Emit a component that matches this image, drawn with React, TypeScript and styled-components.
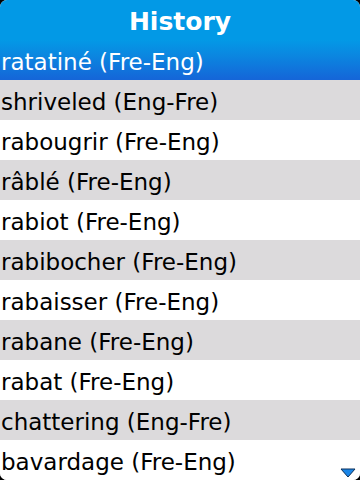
import React from "react";
import styled, { createGlobalStyle } from "styled-components";

const GlobalStyle = createGlobalStyle`
  html, body {
    margin: 0;
    padding: 0;
    background: #000;
  }
  #root {
    width: 360px;
    height: 480px;
  }
`;

const Screen = styled.div`
  position: relative;
  width: 360px;
  height: 480px;
  overflow: hidden;
  border-radius: 7px;
  background: #fff;
  font-family: "DejaVu Sans", "Liberation Sans", sans-serif;
  display: flex;
  flex-direction: column;
`;

const TitleBar = styled.div`
  height: 42px;
  background: #0299e6;
  color: #fff;
  font-weight: bold;
  font-size: 25px;
  display: flex;
  align-items: center;
  justify-content: center;
  padding-top: 2px;
  box-sizing: border-box;
`;

const List = styled.div`
  display: flex;
  flex-direction: column;
`;

const Row = styled.div<{ $shade: "sel" | "gray" | "white" }>`
  height: 40px;
  flex-shrink: 0;
  display: flex;
  align-items: center;
  padding: 3px 0 0 1px;
  box-sizing: border-box;
  font-size: 23px;
  color: ${(p) => (p.$shade === "sel" ? "#fff" : "#000")};
  background: ${(p) =>
    p.$shade === "sel"
      ? "linear-gradient(#0399e6 0%, #0b86e0 40%, #1565d8 100%)"
      : p.$shade === "gray"
      ? "#dcdadc"
      : "#fff"};
`;

const ScrollArrow = styled.svg`
  position: absolute;
  right: 4px;
  bottom: 2px;
`;

const items = [
  "ratatiné (Fre-Eng)",
  "shriveled (Eng-Fre)",
  "rabougrir (Fre-Eng)",
  "râblé (Fre-Eng)",
  "rabiot (Fre-Eng)",
  "rabibocher (Fre-Eng)",
  "rabaisser (Fre-Eng)",
  "rabane (Fre-Eng)",
  "rabat (Fre-Eng)",
  "chattering (Eng-Fre)",
  "bavardage (Fre-Eng)",
];

export default function App() {
  return (
    <>
      <GlobalStyle />
      <Screen>
        <TitleBar>History</TitleBar>
        <List>
          {items.map((t, i) => (
            <Row key={t} $shade={i === 0 ? "sel" : i % 2 === 1 ? "gray" : "white"}>
              {t}
            </Row>
          ))}
        </List>
        <ScrollArrow width="16" height="10" viewBox="0 0 16 10">
          <path d="M1 1 H15 L8 9 Z" fill="#1a86e8" stroke="#0b2f5a" strokeWidth="1" />
        </ScrollArrow>
      </Screen>
    </>
  );
}
